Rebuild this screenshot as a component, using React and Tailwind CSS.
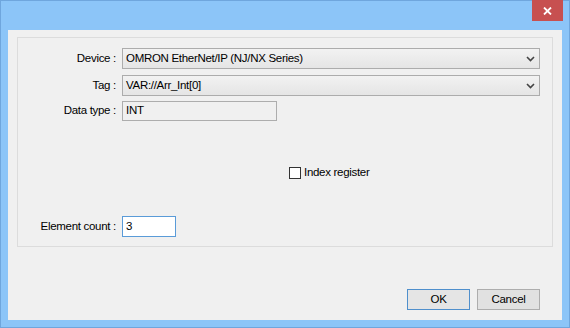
import React from 'react';

const Chevron = () => (
    <svg width="9" height="6" viewBox="0 0 9 6" className="text-[#444]">
        <path d="M1 1 L4.5 4.5 L8 1" fill="none" stroke="currentColor" strokeWidth="1.6" />
    </svg>
);

const Combo = ({ value }) => (
    <div className="w-[418px] h-[21px] border border-[#acacac] bg-gradient-to-b from-[#f2f2f2] to-[#e5e5e5] flex items-center justify-between pl-[3px] pr-[4px]">
        <span>{value}</span>
        <Chevron />
    </div>
);

const Row = ({ label, children, className = '' }) => (
    <div className={`flex items-center ${className}`}>
        <div className="w-[98px] text-right whitespace-nowrap">{label}</div>
        <div className="ml-[6px]">{children}</div>
    </div>
);

export default function App() {
    return (
        <div className="w-[570px] h-[328px] bg-[#8cc5f8] border border-[#6fa6dd] flex flex-col font-['Liberation_Sans',Arial,sans-serif] text-[11.5px] tracking-[-0.3px] text-black">
            <div className="h-[29px] flex justify-end shrink-0">
                <div className="w-[31px] h-[21px] mr-[6px] -mt-px bg-[#c75050] flex items-center justify-center">
                    <svg width="9" height="8" viewBox="0 0 9 8">
                        <path d="M1 0.5 L8 7.5 M8 0.5 L1 7.5" stroke="white" strokeWidth="1.8" />
                    </svg>
                </div>
            </div>
            <div className="mx-[7px] mb-[7px] flex-1 bg-[#f0f0f0] pt-[7px] px-[9px] flex flex-col">
                <div className="h-[210px] border border-[#dcdcdc] flex flex-col pt-[10px]">
                    <Row label="Device :">
                        <Combo value="OMRON EtherNet/IP (NJ/NX Series)" />
                    </Row>
                    <Row label="Tag :" className="mt-[6px]">
                        <Combo value="VAR://Arr_Int[0]" />
                    </Row>
                    <Row label="Data type :" className="mt-[5px]">
                        <div className="w-[155px] h-[20px] border border-[#adadad] bg-[#f0f0f0] flex items-center pl-[3px]">INT</div>
                    </Row>
                    <div className="mt-[43px] pl-[271px] flex items-center gap-[3px]">
                        <div className="w-[12px] h-[12px] border border-[#333] bg-white" />
                        <span>Index register</span>
                    </div>
                    <Row label="Element count :" className="mt-[35px]">
                        <div className="w-[54px] h-[21px] border border-[#5a9bd8] bg-white flex items-center pl-[3px]">3</div>
                    </Row>
                </div>
                <div className="mt-[42px] pr-[13px] flex justify-end gap-[7px]">
                    <div className="w-[63px] h-[21px] border border-[#4f8fcc] bg-[#e5e5e5] flex items-center justify-center">OK</div>
                    <div className="w-[63px] h-[21px] border border-[#adadad] bg-[#e1e1e1] flex items-center justify-center">Cancel</div>
                </div>
            </div>
        </div>
    );
}
